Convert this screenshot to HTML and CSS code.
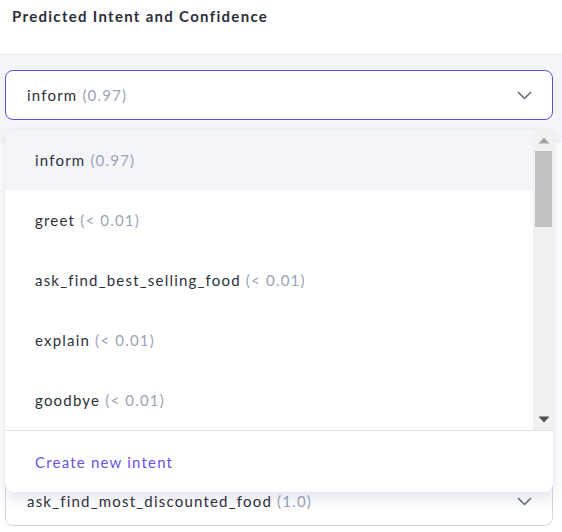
FILE: index.html
```html
<!DOCTYPE html>
<html lang="en">
<head>
<meta charset="utf-8">
<title>Predicted Intent and Confidence</title>
<link rel="stylesheet" href="styles.css">
</head>
<body>
<div class="header">
  <h2 class="title">Predicted Intent and Confidence</h2>
</div>
<div class="panel">
  <div class="field">
    <div class="select open">
      <span class="label">inform <span class="conf">(0.97)</span></span>
      <svg class="chev" width="15" height="9" viewBox="0 0 15 9"><polyline points="1,1 7.5,7.5 14,1" fill="none" stroke="#5f6577" stroke-width="1.5"/></svg>
    </div>
    <div class="popup">
      <div class="scroller">
        <ul class="list">
          <li class="item active">inform <span class="conf">(0.97)</span></li>
          <li class="item">greet <span class="conf">(&lt; 0.01)</span></li>
          <li class="item">ask_find_best_selling_food <span class="conf">(&lt; 0.01)</span></li>
          <li class="item">explain <span class="conf">(&lt; 0.01)</span></li>
          <li class="item">goodbye <span class="conf">(&lt; 0.01)</span></li>
          <li class="item">affirm <span class="conf">(&lt; 0.01)</span></li>
          <li class="item">deny <span class="conf">(&lt; 0.01)</span></li>
          <li class="item">thank_you <span class="conf">(&lt; 0.01)</span></li>
          <li class="item">ask_find_most_discounted_food <span class="conf">(&lt; 0.01)</span></li>
          <li class="item">ask_food_price <span class="conf">(&lt; 0.01)</span></li>
          <li class="item">order_food <span class="conf">(&lt; 0.01)</span></li>
          <li class="item">cancel_order <span class="conf">(&lt; 0.01)</span></li>
          <li class="item">ask_delivery_time <span class="conf">(&lt; 0.01)</span></li>
          <li class="item">ask_opening_hours <span class="conf">(&lt; 0.01)</span></li>
          <li class="item">bot_challenge <span class="conf">(&lt; 0.01)</span></li>
          <li class="item">mood_great <span class="conf">(&lt; 0.01)</span></li>
          <li class="item">mood_unhappy <span class="conf">(&lt; 0.01)</span></li>
        </ul>
        <div class="scrollbar" aria-hidden="true">
          <div class="sb-btn">
            <svg width="12" height="7" viewBox="0 0 12 7"><polygon points="0.5,6.5 6,0.5 11.5,6.5" fill="#a3a3a3"/></svg>
          </div>
          <div class="sb-track"><div class="sb-thumb"></div></div>
          <div class="sb-btn">
            <svg width="12" height="7" viewBox="0 0 12 7"><polygon points="0.5,0.5 11.5,0.5 6,6.5" fill="#505050"/></svg>
          </div>
        </div>
      </div>
      <div class="create">Create new intent</div>
    </div>
  </div>
</div>
<div class="rows">
  <div class="row"><div class="select"><span class="label">greet <span class="conf">(1.0)</span></span></div></div>
  <div class="row"><div class="select"><span class="label">explain <span class="conf">(1.0)</span></span></div></div>
  <div class="row"><div class="select"><span class="label">goodbye <span class="conf">(1.0)</span></span></div></div>
  <div class="row"><div class="select"><span class="label">affirm <span class="conf">(1.0)</span></span></div></div>
  <div class="row last">
    <div class="select">
      <span class="label">ask_find_most_discounted_food <span class="conf">(1.0)</span></span>
      <svg class="chev" width="15" height="9" viewBox="0 0 15 9"><polyline points="1,1 7.5,7.5 14,1" fill="none" stroke="#5f6577" stroke-width="1.5"/></svg>
    </div>
  </div>
</div>
</body>
</html>
```
FILE: styles.css
```css
* { box-sizing: border-box; }
html, body { margin: 0; padding: 0; }
body {
  font-family: Lato, "Open Sans", sans-serif;
  background: #ffffff;
  color: #2d303b;
  width: 562px;
  height: 532px;
  overflow: hidden;
}
.header {
  height: 53px;
  padding: 6px 0 0 12px;
}
.title {
  margin: 0;
  font-size: 15px;
  line-height: 20px;
  font-weight: 700;
  color: #2c2f3a;
  letter-spacing: 1.3px;
  white-space: nowrap;
}
.panel {
  background: #f4f5f9;
  padding: 17px 9px 23px 5px;
}
.field { position: relative; }
.select {
  height: 50px;
  border: 1px solid #d6d9e4;
  border-radius: 8px;
  background: #fff;
  display: flex;
  align-items: center;
  justify-content: space-between;
  padding: 0 20px 0 21px;
  font-size: 15px;
  letter-spacing: 1.2px;
  white-space: nowrap;
}
.select.open { border-color: #5b4fe0; }
.label { color: #2d303b; }
.conf { color: #9aa3b8; }
.chev { display: block; margin-top: 1px; flex: none; }
.popup {
  position: absolute;
  top: 60px;
  left: 0;
  right: 0;
  z-index: 5;
  background: #fff;
  border-radius: 8px;
  overflow: hidden;
  box-shadow: 0 6px 14px rgba(40, 50, 110, 0.13), 0 0 2px rgba(40, 50, 110, 0.08);
}
.scroller {
  display: flex;
  height: 300px;
}
.list {
  flex: 1;
  list-style: none;
  margin: 0;
  padding: 0;
  overflow: hidden;
}
.item {
  height: 60px;
  display: flex;
  align-items: center;
  padding-left: 30px;
  font-size: 15px;
  letter-spacing: 1.2px;
  color: #2d303b;
  white-space: pre;
}
.item.active { background: #f4f5f9; }
.scrollbar {
  width: 20px;
  flex: none;
  background: #f1f1f1;
  display: flex;
  flex-direction: column;
}
.sb-btn {
  height: 21px;
  display: flex;
  align-items: center;
  justify-content: center;
  padding-left: 1px;
}
.sb-track { flex: 1; padding: 0 1px 0 2px; }
.sb-thumb { height: 76px; background: #c1c1c1; }
.create {
  border-top: 1px solid #dfe3ef;
  height: 62px;
  display: flex;
  align-items: center;
  padding-left: 30px;
  font-size: 15px;
  letter-spacing: 1.2px;
  color: #6a52e6;
}
.rows { padding: 0 9px 0 5px; }
.row {
  height: 78px;
  border-bottom: 1px solid #eceef4;
  padding-top: 12px;
}
.row.last { border-bottom: 0; padding-top: 21px; }
```
